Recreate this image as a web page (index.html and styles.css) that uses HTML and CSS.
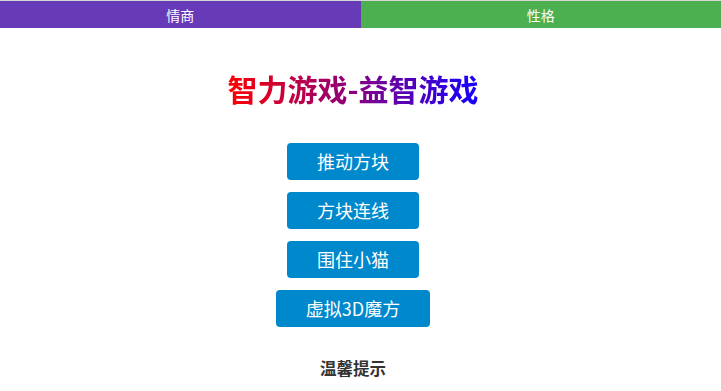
FILE: index.html
```html
<!DOCTYPE html>
<html lang="zh">
<head>
<meta charset="utf-8">
<title>智力游戏-益智游戏</title>
<link rel="stylesheet" href="styles.css">
</head>
<body>
<nav class="tabs">
  <a class="tab tab-eq" href="#">情商</a>
  <a class="tab tab-char" href="#">性格</a>
</nav>
<main class="main">
  <h1 class="title">智力游戏-益智游戏</h1>
  <div class="games">
    <a class="btn" href="#">推动方块</a>
    <a class="btn" href="#">方块连线</a>
    <a class="btn" href="#">围住小猫</a>
    <a class="btn" href="#">虚拟3D魔方</a>
  </div>
  <h3 class="tip">温馨提示</h3>
</main>
</body>
</html>
```
FILE: styles.css
```css
html, body {
  margin: 0;
  padding: 0;
  background: #fff;
}
body {
  font-family: "Noto Sans CJK SC", "Noto Sans", sans-serif;
  border-top: 1px solid #d6d6d6;
}
.tabs {
  display: flex;
  height: 27px;
}
.tab {
  flex: 1;
  display: flex;
  align-items: center;
  justify-content: center;
  color: #fff;
  font-size: 14px;
  text-decoration: none;
}
.tab-eq { background: #673ab7; }
.tab-char { background: #4caf50; }
.main {
  display: flex;
  flex-direction: column;
  align-items: center;
  padding-right: 15px;
}
.title {
  margin: 39px 0 0;
  font-size: 30px;
  line-height: 42px;
  font-weight: bold;
  background: linear-gradient(to right, #ff0000, #1400ff);
  -webkit-background-clip: text;
  background-clip: text;
  color: transparent;
}
.games {
  margin-top: 34px;
  display: flex;
  flex-direction: column;
  align-items: center;
  gap: 12px;
}
.btn {
  display: block;
  background: #0088cc;
  color: #fff;
  font-size: 18px;
  line-height: 25px;
  padding: 6px 30px;
  border-radius: 4px;
  text-decoration: none;
}
.tip {
  margin: 30px 0 0;
  font-size: 16.5px;
  line-height: 22px;
  font-weight: bold;
  color: #333;
}
```
